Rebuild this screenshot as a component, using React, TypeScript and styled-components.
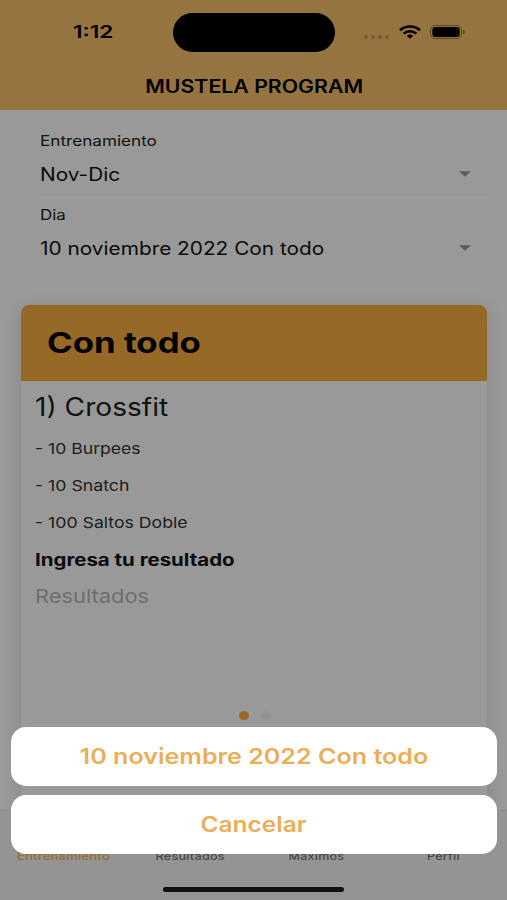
import React from 'react';
import styled, { createGlobalStyle } from 'styled-components';

const GlobalStyle = createGlobalStyle`
  *, *::before, *::after { box-sizing: border-box; }
  body { margin: 0; background: #fff; }
  button { font: inherit; }
`;

const Screen = styled.div`
  position: relative;
  width: 507px;
  height: 900px;
  overflow: hidden;
  display: flex;
  flex-direction: column;
  background: #fff;
  color: #000;
  font-family: Inter, "Liberation Sans", sans-serif;
`;

const Wide = styled.span<{ $x: number; $origin?: string }>`
  display: inline-block;
  white-space: nowrap;
  transform: scaleX(${(p) => p.$x});
  transform-origin: ${(p) => p.$origin ?? 'left'} center;
`;

const Header = styled.header`
  flex: none;
  height: 110px;
  background: #fac169;
`;

const StatusBar = styled.div`
  display: grid;
  grid-template-columns: 173px 162px 1fr;
  align-items: center;
  height: 64px;
`;

const Clock = styled.div`
  padding-left: 73px;
  font-size: 17.5px;
  line-height: 20px;
  font-weight: 600;
`;

const Island = styled.div`
  height: 39px;
  border-radius: 20px;
  background: #000;
`;

const Indicators = styled.div`
  display: flex;
  align-items: center;
  padding-left: 29px;
`;

const Dots = styled.div`
  display: flex;
  gap: 3px;
  margin-top: 9px;
  i { width: 4px; height: 4px; border-radius: 50%; background: rgba(0, 0, 0, 0.22); }
`;

const WifiIcon = styled.svg`
  display: block;
  margin-left: 10px;
`;

const BatteryIcon = styled.svg`
  display: block;
  margin-left: 9px;
`;

const Title = styled.h1`
  margin: 0;
  height: 46px;
  padding-left: 1px;
  line-height: 46px;
  text-align: center;
  font-size: 18px;
  font-weight: 600;
`;

const Form = styled.section`
  flex: none;
  height: 194px;
  padding: 20px 14px 0 40px;
`;

const Field = styled.div`
  height: 74px;
`;

const FieldLabel = styled.div`
  height: 21px;
  line-height: 21px;
  font-size: 14.2px;
  color: #222;
`;

const FieldValue = styled.div`
  display: flex;
  align-items: center;
  justify-content: space-between;
  height: 44px;
  padding: 3px 22px 0 0;
  border-bottom: 1px solid #f9f9f9;
  font-size: 18px;
  color: #111;
`;

const Content = styled.main`
  flex: 1;
  min-height: 0;
  overflow: visible;
  display: flex;
  flex-direction: column;
`;

const Card = styled.article`
  flex: 1;
  margin: 0.5px 20.3px 0 21.3px;
  display: flex;
  flex-direction: column;
  border-radius: 8px 8px 0 0;
  background: #fff;
  box-shadow: 0 4px 18px rgba(0, 0, 0, 0.14);
`;

const CardHeader = styled.h2`
  margin: 0;
  height: 76.5px;
  padding-left: 26px;
  line-height: 76px;
  border-radius: 8px 8px 0 0;
  background: #fbaf41;
  font-size: 28.5px;
  font-weight: 700;
`;

const CardBody = styled.div`
  padding-left: 13.5px;
  color: #222;
`;

const Exercise = styled.h3`
  margin: 0;
  height: 49px;
  line-height: 53px;
  font-size: 25px;
  font-weight: 400;
`;

const Step = styled.p`
  margin: 0;
  height: 37px;
  line-height: 37px;
  font-size: 15px;
  color: #333;
`;

const ResultLabel = styled.div`
  height: 37px;
  line-height: 38px;
  font-size: 17px;
  font-weight: 700;
  color: #111;
`;

const ResultInput = styled.div`
  height: 36px;
  line-height: 37px;
  font-size: 19px;
  color: #b8b8b8;
`;

const Pager = styled.div`
  display: flex;
  gap: 12px;
  margin: 97px 0 0 217.5px;
`;

const PageDot = styled.span<{ $active?: boolean }>`
  width: 10px;
  height: 9px;
  border-radius: 50%;
  background: ${(p) => (p.$active ? '#fbaf41' : '#f6f6f6')};
`;

const TabBar = styled.nav`
  position: relative;
  flex: none;
  display: grid;
  grid-template-columns: repeat(4, 1fr);
  height: 90px;
  padding-top: 36.5px;
  border-top: 1px solid #eaeaea;
  background: #f7f7f7;
`;

const Tab = styled.span<{ $active?: boolean }>`
  text-align: center;
  font-size: 11px;
  font-weight: 500;
  line-height: 16px;
  letter-spacing: 0.2px;
  color: ${(p) => (p.$active ? '#fbb650' : '#777')};
`;

const Backdrop = styled.div`
  position: absolute;
  inset: 0;
  display: flex;
  flex-direction: column;
  justify-content: flex-end;
  align-items: center;
  background: rgba(0, 0, 0, 0.4);
`;

const Sheet = styled.div`
  display: flex;
  flex-direction: column;
  gap: 8.5px;
  width: 486px;
  margin-bottom: 32.8px;
`;

const SheetButton = styled.button`
  height: 59px;
  padding: 0;
  border: 0;
  border-radius: 15px;
  background: #fff;
  color: #ebae57;
  font-size: 21px;
  font-weight: 600;
`;

const HomeIndicator = styled.div`
  width: 181px;
  height: 5.5px;
  margin-bottom: 8px;
  border-radius: 3px;
  background: #111;
`;

const Caret = () => (
  <svg width="12" height="6" viewBox="0 0 12 6">
    <path d="M0 0.3H12L6 5.7Z" fill="#999" />
  </svg>
);

const Wifi = () => (
  <WifiIcon width="22" height="14" viewBox="0 0 22 14" fill="none" stroke="#000" strokeWidth="2.5">
    <path d="M1 5.2C6.6 0.2 15.4 0.2 21 5.2" />
    <path d="M4.6 8.6C8.2 5.4 13.8 5.4 17.4 8.6" />
    <path d="M7.8 10.8C9.6 9.2 12.4 9.2 14.2 10.8L11 13.8Z" fill="#000" stroke="none" />
  </WifiIcon>
);

const Battery = () => (
  <BatteryIcon width="36" height="14" viewBox="0 0 36 14">
    <rect x="0.5" y="0.5" width="31" height="13" rx="4.5" fill="none" stroke="#000" strokeOpacity="0.4" />
    <rect x="2.3" y="2.1" width="27.4" height="9.8" rx="3" fill="#000" />
    <path d="M33 5C35 5.6 35 8.4 33 9Z" fill="#000" fillOpacity="0.45" />
  </BatteryIcon>
);

const steps = [
  { text: '- 10 Burpees', x: 1.173 },
  { text: '- 10 Snatch', x: 1.18 },
  { text: '- 100 Saltos Doble', x: 1.178 },
];

const tabs = [
  { text: 'Entrenamiento', x: 1.18 },
  { text: 'Resultados', x: 1.15 },
  { text: 'Maximos', x: 1.14 },
  { text: 'Perfil', x: 1.14 },
];

export default function App() {
  return (
    <Screen>
      <GlobalStyle />
      <Header>
        <StatusBar>
          <Clock><Wide $x={1.29}>1:12</Wide></Clock>
          <Island />
          <Indicators>
            <Dots><i /><i /><i /><i /></Dots>
            <Wifi />
            <Battery />
          </Indicators>
        </StatusBar>
        <Title><Wide $x={1.182} $origin="center">MUSTELA PROGRAM</Wide></Title>
      </Header>
      <Form>
        <Field>
          <FieldLabel><Wide $x={1.207}>Entrenamiento</Wide></FieldLabel>
          <FieldValue><Wide $x={1.155}>Nov-Dic</Wide><Caret /></FieldValue>
        </Field>
        <Field>
          <FieldLabel><Wide $x={1.19}>Dia</Wide></FieldLabel>
          <FieldValue><Wide $x={1.156}>10 noviembre 2022 Con todo</Wide><Caret /></FieldValue>
        </Field>
      </Form>
      <Content>
        <Card>
          <CardHeader><Wide $x={1.22}>Con todo</Wide></CardHeader>
          <CardBody>
            <Exercise><Wide $x={1.125}>1) Crossfit</Wide></Exercise>
            {steps.map((s) => (
              <Step key={s.text}><Wide $x={s.x}>{s.text}</Wide></Step>
            ))}
            <ResultLabel><Wide $x={1.203}>Ingresa tu resultado</Wide></ResultLabel>
            <ResultInput><Wide $x={1.15}>Resultados</Wide></ResultInput>
          </CardBody>
          <Pager><PageDot $active /><PageDot /></Pager>
        </Card>
      </Content>
      <TabBar>
        {tabs.map((t, i) => (
          <Tab key={t.text} $active={i === 0}><Wide $x={t.x} $origin="center">{t.text}</Wide></Tab>
        ))}
      </TabBar>
      <Backdrop>
        <Sheet>
          <SheetButton><Wide $x={1.195} $origin="center">10 noviembre 2022 Con todo</Wide></SheetButton>
          <SheetButton><Wide $x={1.165} $origin="center">Cancelar</Wide></SheetButton>
        </Sheet>
        <HomeIndicator />
      </Backdrop>
    </Screen>
  );
}
